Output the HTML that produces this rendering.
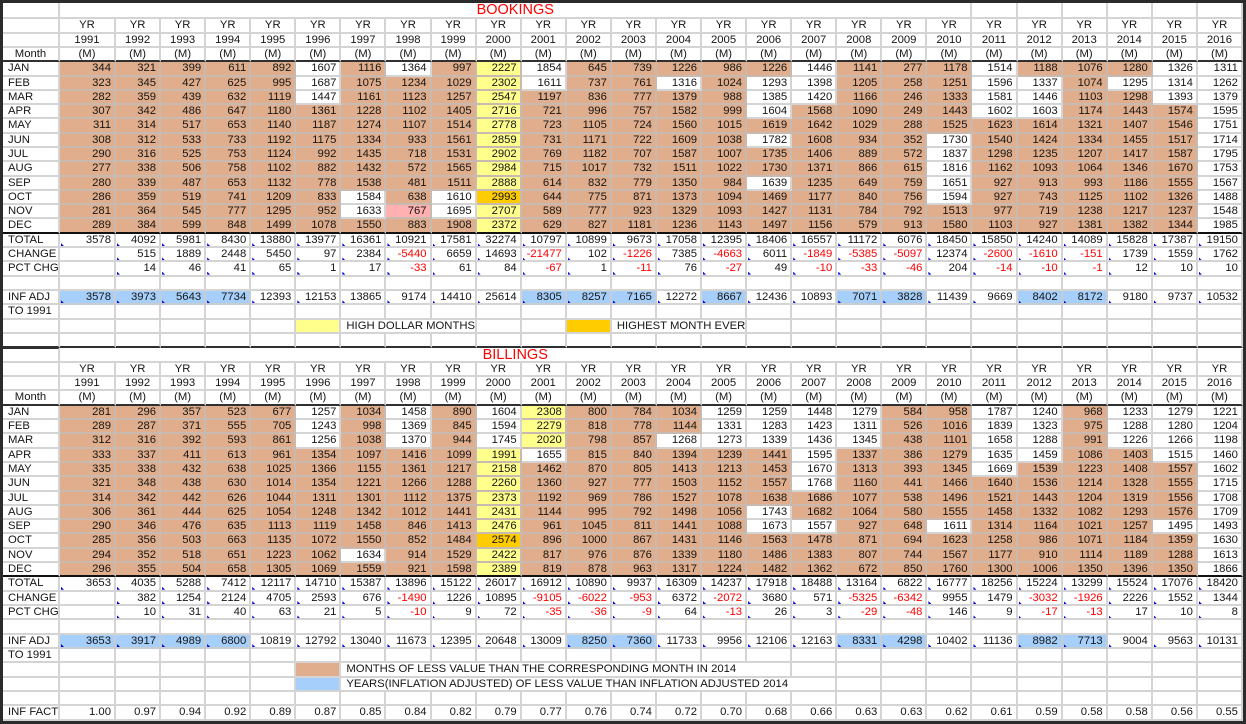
<!DOCTYPE html>
<html>
<head>
<meta charset="utf-8">
<title>Bookings and Billings</title>
<style>
html,body{margin:0;padding:0;width:1246px;height:724px;overflow:hidden;background:#2b2b2b}
#p{position:absolute;left:3px;top:3px;width:1240px;height:718px;background:#fff;overflow:hidden;filter:blur(.3px);font:11.3px/13px "Liberation Sans",Arial,sans-serif;color:#151515}
table{position:absolute;left:0;display:block;border-spacing:0;border-collapse:separate}
tbody{display:block}
tr{display:grid;grid-template-columns:57px 56px repeat(25,45.08px);grid-template-rows:14.3px;height:14.3px}
#b tr{grid-template-rows:14.32px;height:14.32px}
td{display:block;position:relative;box-sizing:border-box;padding:0 3px 0 0;text-align:right;white-space:nowrap;line-height:13px;border-right:2px solid #d4d4d4;border-bottom:2px solid #d4d4d4;background:#fff;min-width:0;overflow:visible}
td:first-child{text-align:left;padding-left:5px}
tr.ti{grid-template-rows:16.33px!important;height:16.33px!important}
#b tr.ti{grid-template-rows:14px!important;height:14px!important}
.ti td:nth-child(2){grid-column:span 20;text-align:center;color:#f00;font-size:14.5px;line-height:15px;padding:0}
#b .ti td:nth-child(2){line-height:12px}
.h td,.h td:first-child{text-align:center;padding:0}
.k td{border-bottom-color:#303030}
.mo td{background:#e0ae8c;border-color:#c8bab0}
.mo td:first-child,.mo .w{background:#fff;border-color:#d4d4d4}
.mo .y{background:#ffff8c}
.mo .o{background:#ffcc00}
.mo .p{background:#ffb0b0}
.mo.k td{border-bottom-color:#111}
td.bl{background:#a6d0fb;border-color:#c6ccd2}
td.ly{background:#ffff8c}
td.lo{background:#ffcc00}
td.lt{background:#e0ae8c}
td.lb{background:#a6d0fb}
td.x{grid-column:span 3;text-align:left;padding-left:5px}
td.x10{grid-column:span 10;text-align:left;padding-left:5px}
td.x11{grid-column:span 11;text-align:left;padding-left:5px}
td.r{color:#f00}
.m td:not(:first-child):not(.n)::after{content:"";position:absolute;left:1px;bottom:0;width:3px;height:3px;background:#0000e0;clip-path:polygon(0 0,100% 100%,0 100%)}
</style>
</head>
<body>
<div id="p">
<table id="a" style="top:0">
<tr class=ti><td><td>BOOKINGS<td><td><td><td><td><td>
<tr class=h><td><td>YR<td>YR<td>YR<td>YR<td>YR<td>YR<td>YR<td>YR<td>YR<td>YR<td>YR<td>YR<td>YR<td>YR<td>YR<td>YR<td>YR<td>YR<td>YR<td>YR<td>YR<td>YR<td>YR<td>YR<td>YR<td>YR
<tr class=h><td><td>1991<td>1992<td>1993<td>1994<td>1995<td>1996<td>1997<td>1998<td>1999<td>2000<td>2001<td>2002<td>2003<td>2004<td>2005<td>2006<td>2007<td>2008<td>2009<td>2010<td>2011<td>2012<td>2013<td>2014<td>2015<td>2016
<tr class="h k"><td>Month<td>(M)<td>(M)<td>(M)<td>(M)<td>(M)<td>(M)<td>(M)<td>(M)<td>(M)<td>(M)<td>(M)<td>(M)<td>(M)<td>(M)<td>(M)<td>(M)<td>(M)<td>(M)<td>(M)<td>(M)<td>(M)<td>(M)<td>(M)<td>(M)<td>(M)<td>(M)
<tr class=mo><td>JAN<td>344<td>321<td>399<td>611<td>892<td class=w>1607<td>1116<td class=w>1364<td>997<td class=y>2227<td class=w>1854<td>645<td>739<td>1226<td>986<td>1226<td class=w>1446<td>1141<td>277<td>1178<td class=w>1514<td>1188<td>1076<td>1280<td class=w>1326<td class=w>1311
<tr class=mo><td>FEB<td>323<td>345<td>427<td>625<td>995<td class=w>1687<td>1075<td>1234<td>1029<td class=y>2302<td class=w>1611<td>737<td>761<td class=w>1316<td>1024<td class=w>1293<td class=w>1398<td>1205<td>258<td>1251<td class=w>1596<td class=w>1337<td>1074<td class=w>1295<td class=w>1314<td class=w>1262
<tr class=mo><td>MAR<td>282<td>359<td>439<td>632<td>1119<td class=w>1447<td>1161<td>1123<td>1257<td class=y>2547<td>1197<td>836<td>777<td>1379<td>988<td class=w>1385<td class=w>1420<td>1166<td>246<td>1333<td class=w>1581<td class=w>1446<td>1103<td>1298<td class=w>1393<td class=w>1379
<tr class=mo><td>APR<td>307<td>342<td>486<td>647<td>1180<td>1361<td>1228<td>1102<td>1405<td class=y>2716<td>721<td>996<td>757<td>1582<td>999<td class=w>1604<td>1568<td>1090<td>249<td>1443<td class=w>1602<td class=w>1603<td>1174<td>1443<td>1574<td class=w>1595
<tr class=mo><td>MAY<td>311<td>314<td>517<td>653<td>1140<td>1187<td>1274<td>1107<td>1514<td class=y>2778<td>723<td>1105<td>724<td>1560<td>1015<td>1619<td>1642<td>1029<td>288<td>1525<td>1623<td>1614<td>1321<td>1407<td>1546<td class=w>1751
<tr class=mo><td>JUN<td>308<td>312<td>533<td>733<td>1192<td>1175<td>1334<td>933<td>1561<td class=y>2859<td>731<td>1171<td>722<td>1609<td>1038<td class=w>1782<td>1608<td>934<td>352<td class=w>1730<td>1540<td>1424<td>1334<td>1455<td>1517<td class=w>1714
<tr class=mo><td>JUL<td>290<td>316<td>525<td>753<td>1124<td>992<td>1435<td>718<td>1531<td class=y>2902<td>769<td>1182<td>707<td>1587<td>1007<td>1735<td>1406<td>889<td>572<td class=w>1837<td>1298<td>1235<td>1207<td>1417<td>1587<td class=w>1795
<tr class=mo><td>AUG<td>277<td>338<td>506<td>758<td>1102<td>882<td>1432<td>572<td>1565<td class=y>2984<td>715<td>1017<td>732<td>1511<td>1022<td>1730<td>1371<td>866<td>615<td class=w>1816<td>1162<td>1093<td>1064<td>1346<td>1670<td class=w>1753
<tr class=mo><td>SEP<td>280<td>339<td>487<td>653<td>1132<td>778<td>1538<td>481<td>1511<td class=y>2888<td>614<td>832<td>779<td>1350<td>984<td class=w>1639<td>1235<td>649<td>759<td class=w>1651<td>927<td>913<td>993<td>1186<td>1555<td class=w>1567
<tr class=mo><td>OCT<td>286<td>359<td>519<td>741<td>1209<td>833<td class=w>1584<td>638<td class=w>1610<td class=o>2993<td>644<td>775<td>871<td>1373<td>1094<td>1469<td>1177<td>840<td>756<td class=w>1594<td>927<td>743<td>1125<td>1102<td>1326<td class=w>1488
<tr class=mo><td>NOV<td>281<td>364<td>545<td>777<td>1295<td>952<td class=w>1633<td class=p>767<td class=w>1695<td class=y>2707<td>589<td>777<td>923<td>1329<td>1093<td>1427<td>1131<td>784<td>792<td>1513<td>977<td>719<td>1238<td>1217<td>1237<td class=w>1548
<tr class="mo k"><td>DEC<td>289<td>384<td>599<td>848<td>1499<td>1078<td>1550<td>883<td>1908<td class=y>2372<td>629<td>827<td>1181<td>1236<td>1143<td>1497<td>1156<td>579<td>913<td>1580<td>1103<td>927<td>1381<td>1382<td>1344<td class=w>1985
<tr class=m><td>TOTAL<td>3578<td>4092<td>5981<td>8430<td>13880<td>13977<td>16361<td>10921<td>17581<td>32274<td>10797<td>10899<td>9673<td>17058<td>12395<td>18406<td>16557<td>11172<td>6076<td>18450<td>15850<td>14240<td>14089<td>15828<td>17387<td>19150
<tr class=m><td>CHANGE<td class=n><td>515<td>1889<td>2448<td>5450<td>97<td>2384<td class=r>-5440<td>6659<td>14693<td class=r>-21477<td>102<td class=r>-1226<td>7385<td class=r>-4663<td>6011<td class=r>-1849<td class=r>-5385<td class=r>-5097<td>12374<td class=r>-2600<td class=r>-1610<td class=r>-151<td>1739<td>1559<td>1762
<tr class=m><td>PCT CHG<td class=n><td>14<td>46<td>41<td>65<td>1<td>17<td class=r>-33<td>61<td>84<td class=r>-67<td>1<td class=r>-11<td>76<td class=r>-27<td>49<td class=r>-10<td class=r>-33<td class=r>-46<td>204<td class=r>-14<td class=r>-10<td class=r>-1<td>12<td>10<td>10
<tr><td><td><td><td><td><td><td><td><td><td><td><td><td><td><td><td><td><td><td><td><td><td><td><td><td><td><td><td>
<tr class=m><td>INF ADJ<td class=bl>3578<td class=bl>3973<td class=bl>5643<td class=bl>7734<td>12393<td>12153<td>13865<td>9174<td>14410<td>25614<td class=bl>8305<td class=bl>8257<td class=bl>7165<td>12272<td class=bl>8667<td>12436<td>10893<td class=bl>7071<td class=bl>3828<td>11439<td>9669<td class=bl>8402<td class=bl>8172<td>9180<td>9737<td>10532
<tr><td>TO 1991<td><td><td><td><td><td><td><td><td><td><td><td><td><td><td><td><td><td><td><td><td><td><td><td><td><td><td>
<tr><td><td><td><td><td><td><td class=ly><td class=x>HIGH DOLLAR MONTHS<td><td><td class=lo><td class=x>HIGHEST MONTH EVER<td><td><td><td><td><td><td><td><td><td><td><td>
<tr class=k><td><td><td><td><td><td><td><td><td><td><td><td><td><td><td><td><td><td><td><td><td><td><td><td><td><td><td><td>
</table>
<table id="b" style="top:345.7px">
<tr class=ti><td><td>BILLINGS<td><td><td><td><td><td>
<tr class=h><td><td>YR<td>YR<td>YR<td>YR<td>YR<td>YR<td>YR<td>YR<td>YR<td>YR<td>YR<td>YR<td>YR<td>YR<td>YR<td>YR<td>YR<td>YR<td>YR<td>YR<td>YR<td>YR<td>YR<td>YR<td>YR<td>YR
<tr class=h><td><td>1991<td>1992<td>1993<td>1994<td>1995<td>1996<td>1997<td>1998<td>1999<td>2000<td>2001<td>2002<td>2003<td>2004<td>2005<td>2006<td>2007<td>2008<td>2009<td>2010<td>2011<td>2012<td>2013<td>2014<td>2015<td>2016
<tr class="h k"><td>Month<td>(M)<td>(M)<td>(M)<td>(M)<td>(M)<td>(M)<td>(M)<td>(M)<td>(M)<td>(M)<td>(M)<td>(M)<td>(M)<td>(M)<td>(M)<td>(M)<td>(M)<td>(M)<td>(M)<td>(M)<td>(M)<td>(M)<td>(M)<td>(M)<td>(M)<td>(M)
<tr class=mo><td>JAN<td>281<td>296<td>357<td>523<td>677<td class=w>1257<td>1034<td class=w>1458<td>890<td class=w>1604<td class=y>2308<td>800<td>784<td>1034<td class=w>1259<td class=w>1259<td class=w>1448<td class=w>1279<td>584<td>958<td class=w>1787<td class=w>1240<td>968<td class=w>1233<td class=w>1279<td class=w>1221
<tr class=mo><td>FEB<td>289<td>287<td>371<td>555<td>705<td class=w>1243<td>998<td class=w>1369<td>845<td class=w>1594<td class=y>2279<td>818<td>778<td>1144<td class=w>1331<td class=w>1283<td class=w>1423<td class=w>1311<td>526<td>1016<td class=w>1839<td class=w>1323<td>975<td class=w>1288<td class=w>1280<td class=w>1204
<tr class=mo><td>MAR<td>312<td>316<td>392<td>593<td>861<td class=w>1256<td>1038<td class=w>1370<td>944<td class=w>1745<td class=y>2020<td>798<td>857<td class=w>1268<td class=w>1273<td class=w>1339<td class=w>1436<td class=w>1345<td>438<td>1101<td class=w>1658<td class=w>1288<td>991<td class=w>1226<td class=w>1266<td class=w>1198
<tr class=mo><td>APR<td>333<td>337<td>411<td>613<td>961<td>1354<td>1097<td>1416<td>1099<td class=y>1991<td class=w>1655<td>815<td>840<td>1394<td>1239<td>1441<td class=w>1595<td>1337<td>386<td>1279<td class=w>1635<td class=w>1459<td>1086<td>1403<td class=w>1515<td class=w>1460
<tr class=mo><td>MAY<td>335<td>338<td>432<td>638<td>1025<td>1366<td>1155<td>1361<td>1217<td class=y>2158<td>1462<td>870<td>805<td>1413<td>1213<td>1453<td class=w>1670<td>1313<td>393<td>1345<td class=w>1669<td>1539<td>1223<td>1408<td>1557<td class=w>1602
<tr class=mo><td>JUN<td>321<td>348<td>438<td>630<td>1014<td>1354<td>1221<td>1266<td>1288<td class=y>2260<td>1360<td>927<td>777<td>1503<td>1152<td>1557<td class=w>1768<td>1160<td>441<td>1466<td>1640<td>1536<td>1214<td>1328<td>1555<td class=w>1715
<tr class=mo><td>JUL<td>314<td>342<td>442<td>626<td>1044<td>1311<td>1301<td>1112<td>1375<td class=y>2373<td>1192<td>969<td>786<td>1527<td>1078<td>1638<td>1686<td>1077<td>538<td>1496<td>1521<td>1443<td>1204<td>1319<td>1556<td class=w>1708
<tr class=mo><td>AUG<td>306<td>361<td>444<td>625<td>1054<td>1248<td>1342<td>1012<td>1441<td class=y>2431<td>1144<td>995<td>792<td>1498<td>1056<td class=w>1743<td>1682<td>1064<td>580<td>1555<td>1458<td>1332<td>1082<td>1293<td>1576<td class=w>1709
<tr class=mo><td>SEP<td>290<td>346<td>476<td>635<td>1113<td>1119<td>1458<td>846<td>1413<td class=y>2476<td>961<td>1045<td>811<td>1441<td>1088<td class=w>1673<td class=w>1557<td>927<td>648<td class=w>1611<td>1314<td>1164<td>1021<td>1257<td class=w>1495<td class=w>1493
<tr class=mo><td>OCT<td>285<td>356<td>503<td>663<td>1135<td>1072<td>1550<td>852<td>1484<td class=o>2574<td>896<td>1000<td>867<td>1431<td>1146<td>1563<td>1478<td>871<td>694<td>1623<td>1258<td>986<td>1071<td>1184<td>1359<td class=w>1630
<tr class=mo><td>NOV<td>294<td>352<td>518<td>651<td>1223<td>1062<td class=w>1634<td>914<td>1529<td class=y>2422<td>817<td>976<td>876<td>1339<td>1180<td>1486<td>1383<td>807<td>744<td>1567<td>1177<td>910<td>1114<td>1189<td>1288<td class=w>1613
<tr class="mo k"><td>DEC<td>296<td>355<td>504<td>658<td>1305<td>1069<td>1559<td>921<td>1598<td class=y>2389<td>819<td>878<td>963<td>1317<td>1224<td>1482<td>1362<td>672<td>850<td>1760<td>1300<td>1006<td>1350<td>1396<td>1350<td class=w>1866
<tr class=m><td>TOTAL<td>3653<td>4035<td>5288<td>7412<td>12117<td>14710<td>15387<td>13896<td>15122<td>26017<td>16912<td>10890<td>9937<td>16309<td>14237<td>17918<td>18488<td>13164<td>6822<td>16777<td>18256<td>15224<td>13299<td>15524<td>17076<td>18420
<tr class=m><td>CHANGE<td class=n><td>382<td>1254<td>2124<td>4705<td>2593<td>676<td class=r>-1490<td>1226<td>10895<td class=r>-9105<td class=r>-6022<td class=r>-953<td>6372<td class=r>-2072<td>3680<td>571<td class=r>-5325<td class=r>-6342<td>9955<td>1479<td class=r>-3032<td class=r>-1926<td>2226<td>1552<td>1344
<tr class=m><td>PCT CHG<td class=n><td>10<td>31<td>40<td>63<td>21<td>5<td class=r>-10<td>9<td>72<td class=r>-35<td class=r>-36<td class=r>-9<td>64<td class=r>-13<td>26<td>3<td class=r>-29<td class=r>-48<td>146<td>9<td class=r>-17<td class=r>-13<td>17<td>10<td>8
<tr><td><td><td><td><td><td><td><td><td><td><td><td><td><td><td><td><td><td><td><td><td><td><td><td><td><td><td><td>
<tr class=m><td>INF ADJ<td class=bl>3653<td class=bl>3917<td class=bl>4989<td class=bl>6800<td>10819<td>12792<td>13040<td>11673<td>12395<td>20648<td>13009<td class=bl>8250<td class=bl>7360<td>11733<td>9956<td>12106<td>12163<td class=bl>8331<td class=bl>4298<td>10402<td>11136<td class=bl>8982<td class=bl>7713<td>9004<td>9563<td>10131
<tr><td>TO 1991<td><td><td><td><td><td><td><td><td><td><td><td><td><td><td><td><td><td><td><td><td><td><td><td><td><td><td><td>
<tr><td><td><td><td><td><td><td class=lt><td class=x10>MONTHS OF LESS VALUE THAN THE CORRESPONDING MONTH IN 2014<td><td><td><td><td><td><td><td><td><td><td>
<tr><td><td><td><td><td><td><td class=lb><td class=x11>YEARS(INFLATION ADJUSTED) OF LESS VALUE THAN INFLATION ADJUSTED 2014<td><td><td><td><td><td><td><td><td><td>
<tr><td><td><td><td><td><td><td><td><td><td><td><td><td><td><td><td><td><td><td><td><td><td><td><td><td><td><td><td>
<tr><td>INF FACT<td>1.00<td>0.97<td>0.94<td>0.92<td>0.89<td>0.87<td>0.85<td>0.84<td>0.82<td>0.79<td>0.77<td>0.76<td>0.74<td>0.72<td>0.70<td>0.68<td>0.66<td>0.63<td>0.63<td>0.62<td>0.61<td>0.59<td>0.58<td>0.58<td>0.56<td>0.55
</table>
</div>
</body>
</html>
